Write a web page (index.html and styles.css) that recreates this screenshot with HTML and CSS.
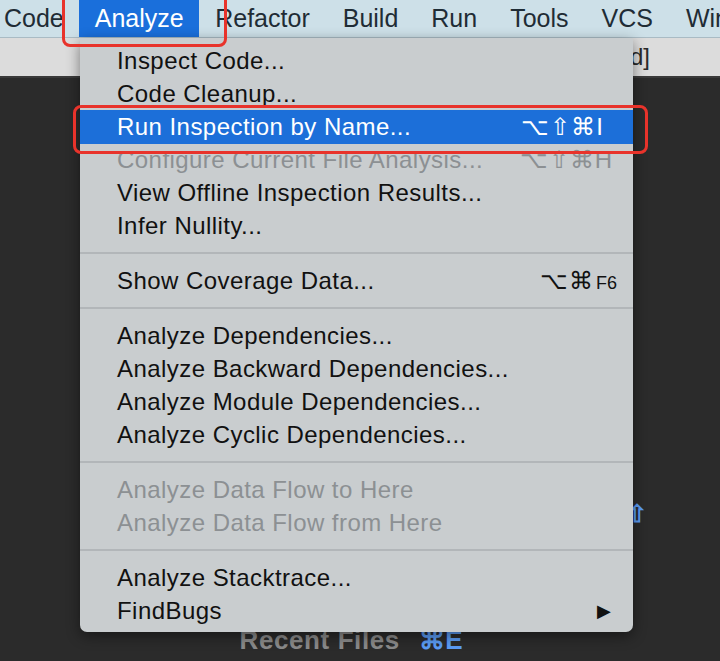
FILE: index.html
```html
<!DOCTYPE html>
<html>
<head>
<meta charset="utf-8">
<link rel="stylesheet" href="styles.css">
</head>
<body>
<div class="screen">
  <div class="menubar">
    <span class="mb-item">Code</span>
    <span class="mb-item active">Analyze</span>
    <span class="mb-item">Refactor</span>
    <span class="mb-item">Build</span>
    <span class="mb-item">Run</span>
    <span class="mb-item">Tools</span>
    <span class="mb-item">VCS</span>
    <span class="mb-item">Window</span>
  </div>
  <div class="titlestrip"><span class="title">[android]</span></div>
  <div class="editor">
    <div class="hints">
      <div class="hint hint-search"><span class="hint-key">Double ⇧</span></div>
      <div class="hint hint-recent"><span class="hint-label">Recent Files</span> <span class="hint-key">⌘E</span></div>
    </div>
  </div>

  <div class="menu">
    <div class="mi"><span class="lbl">Inspect Code...</span></div>
    <div class="mi"><span class="lbl">Code Cleanup...</span></div>
    <div class="mi sel"><span class="lbl">Run Inspection by Name...</span><span class="sc">⌥⇧⌘I</span></div>
    <div class="mi dis"><span class="lbl">Configure Current File Analysis...</span><span class="sc">⌥⇧⌘H</span></div>
    <div class="mi"><span class="lbl">View Offline Inspection Results...</span></div>
    <div class="mi"><span class="lbl">Infer Nullity...</span></div>
    <div class="sep"></div>
    <div class="mi"><span class="lbl">Show Coverage Data...</span><span class="sc sc-cov">⌥⌘<small class="fk">F6</small></span></div>
    <div class="sep"></div>
    <div class="mi"><span class="lbl">Analyze Dependencies...</span></div>
    <div class="mi"><span class="lbl">Analyze Backward Dependencies...</span></div>
    <div class="mi"><span class="lbl">Analyze Module Dependencies...</span></div>
    <div class="mi"><span class="lbl">Analyze Cyclic Dependencies...</span></div>
    <div class="sep"></div>
    <div class="mi dis"><span class="lbl">Analyze Data Flow to Here</span></div>
    <div class="mi dis"><span class="lbl">Analyze Data Flow from Here</span></div>
    <div class="sep"></div>
    <div class="mi"><span class="lbl">Analyze Stacktrace...</span></div>
    <div class="mi"><span class="lbl">FindBugs</span><span class="arrow">▶</span></div>
  </div>

  <div class="mark mark-menu"></div>
  <div class="mark mark-item"></div>
</div>
</body>
</html>
```

FILE: styles.css
```css
html, body {
  margin: 0;
  padding: 0;
}
body {
  background: #2b2b2b;
  font-family: "Liberation Sans", Arial, sans-serif;
  width: 720px;
  height: 661px;
  overflow: hidden;
}
.screen {
  position: relative;
  width: 720px;
  height: 661px;
  overflow: hidden;
  display: flex;
  flex-direction: column;
}
.menubar {
  height: 37px;
  background: #cde0e8;
  border-bottom: 1px solid #a9bbc4;
  display: flex;
  align-items: center;
  font-size: 25px;
  color: #1f2c35;
  white-space: nowrap;
  flex: none;
}
.mb-item {
  height: 37px;
  line-height: 37px;
  padding: 0 16.5px;
}
.mb-item:first-child {
  padding-left: 4px;
  padding-right: 15px;
}
.mb-item.active {
  background: #1a6fdb;
  color: #fff;
  padding: 0 15px 0 16px;
}
.titlestrip {
  height: 38px;
  background: #dcdcdc;
  border-bottom: 2px solid #3a3a3a;
  display: flex;
  align-items: center;
  justify-content: flex-end;
  padding-right: 70px;
  font-size: 24px;
  color: #2a2a2a;
  flex: none;
  overflow: hidden;
  white-space: nowrap;
}
.editor {
  flex: 1;
  background: #2b2b2b;
  display: flex;
  flex-direction: column;
  justify-content: flex-end;
}
.hints {
  display: flex;
  flex-direction: column;
  align-items: center;
  font-size: 26px;
  font-weight: bold;
  padding-bottom: 0;
  padding-right: 18px;
}
.hint {
  line-height: 42px;
  white-space: nowrap;
}
.hint-label {
  color: #8a8a8a;
  letter-spacing: 0.6px;
}
.hint-key {
  color: #5b9cf5;
  margin-left: 12px;
}
.hint-search {
  margin-left: 472px;
  margin-bottom: 84px;
  font-size: 24px;
}

/* dropdown menu */
.menu {
  position: absolute;
  left: 80px;
  top: 38px;
  width: 553px;
  box-sizing: border-box;
  padding: 6px 0 5px;
  background: #c9cdcf;
  border-radius: 0 0 7px 7px;
  box-shadow: 0 4px 14px rgba(0,0,0,0.45);
  font-size: 24px;
  color: #111;
}
.mi {
  height: 33px;
  display: flex;
  align-items: center;
  justify-content: space-between;
  padding: 0 20px 0 37px;
  white-space: nowrap;
}
.lbl {
  letter-spacing: 0.45px;
}
.mi.sel {
  background: #1c6fd9;
  color: #fff;
  height: 34px;
  margin-bottom: -1px;
  padding-right: 29px;
}
.mi.dis {
  color: #8c9093;
}
.sc {
  letter-spacing: 1px;
}
.sc-cov {
  margin-right: -4px;
}
.fk {
  font-size: 18px;
  letter-spacing: 0;
  margin-left: 2px;
}
.arrow {
  font-size: 18px;
  margin-right: 2px;
}
.sep {
  height: 22px;
  display: flex;
  align-items: center;
}
.sep::after {
  content: "";
  display: block;
  width: 100%;
  height: 2px;
  background: #b2b6b9;
}

/* red annotation boxes */
.mark {
  position: absolute;
  border: 3px solid #e8332b;
  border-radius: 8px;
  box-sizing: border-box;
}
.mark-menu {
  left: 62px;
  top: -12px;
  width: 165px;
  height: 59px;
}
.mark-item {
  left: 73px;
  top: 105px;
  width: 575px;
  height: 49px;
}
```
